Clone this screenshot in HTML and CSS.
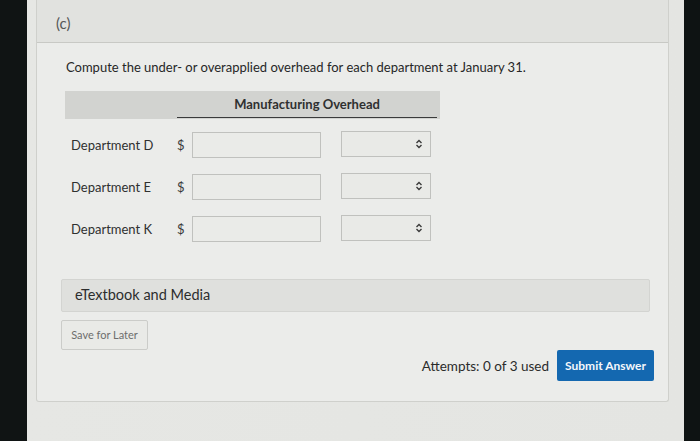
FILE: index.html
```html
<!DOCTYPE html>
<html>
<head>
<meta charset="utf-8">
<link rel="stylesheet" href="styles.css">
</head>
<body>
<div class="bezel-left"></div>
<div class="screen">
  <div class="card">
    <div class="part-head">(c)</div>
    <div class="card-body">
      <p class="prompt">Compute the under- or overapplied overhead for each department at January 31.</p>
      <div class="table">
        <div class="table-head">
          <span class="head-title">Manufacturing Overhead</span>
        </div>
        <div class="row">
          <span class="label">Department D</span>
          <span class="dollar">$</span>
          <span class="input"></span>
          <span class="select"><svg class="chev" width="8" height="10" viewBox="0 0 8 10"><path d="M1.5 4 L4 1.5 L6.5 4 M1.5 6 L4 8.5 L6.5 6" fill="none" stroke="#3a3a3a" stroke-width="1.4"/></svg></span>
        </div>
        <div class="row">
          <span class="label">Department E</span>
          <span class="dollar">$</span>
          <span class="input"></span>
          <span class="select"><svg class="chev" width="8" height="10" viewBox="0 0 8 10"><path d="M1.5 4 L4 1.5 L6.5 4 M1.5 6 L4 8.5 L6.5 6" fill="none" stroke="#3a3a3a" stroke-width="1.4"/></svg></span>
        </div>
        <div class="row">
          <span class="label">Department K</span>
          <span class="dollar">$</span>
          <span class="input"></span>
          <span class="select"><svg class="chev" width="8" height="10" viewBox="0 0 8 10"><path d="M1.5 4 L4 1.5 L6.5 4 M1.5 6 L4 8.5 L6.5 6" fill="none" stroke="#3a3a3a" stroke-width="1.4"/></svg></span>
        </div>
      </div>
      <div class="media">eTextbook and Media</div>
      <div class="save">Save for Later</div>
      <div class="submit-row">
        <span class="attempts">Attempts: 0 of 3 used</span>
        <span class="submit">Submit Answer</span>
      </div>
    </div>
  </div>
</div>
<div class="bezel-right"></div>
</body>
</html>
```
FILE: styles.css
```css
* { box-sizing: border-box; }
html, body { margin: 0; height: 100%; }
body {
  display: flex;
  width: 700px;
  height: 441px;
  overflow: hidden;
  background: #e3e4e1;
  font-family: Lato, "Open Sans", sans-serif;
  color: #2f3030;
}
.bezel-left { width: 27px; flex: none; background: #101414; }
.bezel-right { width: 16px; flex: none; background: #0e1313; margin-left: auto; }
.screen {
  flex: none;
  width: 657px;
  padding-left: 9px;
  background: linear-gradient(90deg, #e6e7e4, #e4e5e2);
}
.card {
  width: 633px;
  height: 402px;
  border: 1px solid #cfd0cc;
  border-top: none;
  background: #ebecea;
  border-radius: 0 0 3px 3px;
}
.part-head {
  height: 43px;
  background: #e1e2df;
  border-bottom: 1px solid #c8c9c5;
  padding-left: 19px;
  padding-top: 14px;
  font-size: 15px;
  color: #555757;
}
.card-body { padding: 15px 14px 0 24px; }
.prompt {
  margin: 0 0 0 5px;
  font-size: 13px;
  line-height: 18px;
  color: #262727;
}
.table { margin-top: 15px; margin-left: 4px; width: 375px; }
.table-head {
  height: 28px;
  background: #d2d3d0;
  padding-left: 112px;
  padding-right: 3px;
  display: flex;
  align-items: flex-end;
}
.head-title {
  flex: 1;
  text-align: center;
  font-weight: 700;
  font-size: 13px;
  line-height: 18px;
  padding-bottom: 4px;
  border-bottom: 1.5px solid #3a3b3b;
  margin-bottom: 1px;
}
.row {
  display: grid;
  grid-template-columns: 112px 15px 129px 90px;
  align-items: center;
  height: 26px;
  margin-top: 16px;
}
.table-head + .row { margin-top: 13px; }
.label { padding-left: 6px; font-size: 13px; color: #2f3030; }
.dollar { font-size: 13px; color: #3a3b3b; }
.input {
  height: 26px;
  width: 129px;
  background: #eaebe8;
  border: 1px solid #c0c1be;
}
.select {
  width: 90px;
  height: 26px;
  margin-left: 20px;
  margin-top: -3px;
  background: #e9eae7;
  border: 1px solid #c0c1be;
  display: flex;
  align-items: center;
  justify-content: flex-end;
  padding-right: 7px;
}
.media {
  margin-top: 37px;
  height: 33px;
  width: 589px;
  background: #dfe0dd;
  border: 1px solid #d3d4d1;
  border-radius: 2px;
  padding-left: 13px;
  font-size: 14.5px;
  line-height: 29px;
  color: #2c2d2d;
}
.save {
  margin-top: 8px;
  width: 87px;
  height: 30px;
  border: 1px solid #cbccc9;
  border-radius: 2px;
  background: #e9eae7;
  font-size: 11px;
  line-height: 28px;
  text-align: center;
  color: #6d6e6d;
}
.submit-row {
  display: flex;
  justify-content: flex-end;
  align-items: center;
  gap: 8px;
}
.attempts { font-size: 13.5px; color: #2a2b2b; }
.submit {
  width: 97px;
  height: 31px;
  background: #1468b0;
  color: #f4f7fb;
  border-radius: 2px;
  font-size: 12px;
  font-weight: 700;
  line-height: 31px;
  text-align: center;
}
```
